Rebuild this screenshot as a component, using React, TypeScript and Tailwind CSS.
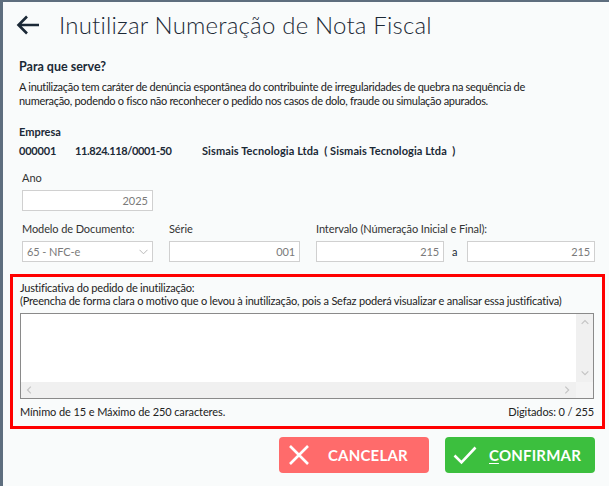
import React from 'react';

function Chevron({ dir }: { dir: 'up' | 'down' | 'left' | 'right' }) {
  const paths = {
    up: 'M2 7l4-4 4 4',
    down: 'M2 4l4 4 4-4',
    left: 'M7 2L3 6l4 4',
    right: 'M4 2l4 4-4 4',
  };
  return (
    <svg width="10" height="10" viewBox="0 0 12 12" fill="none" stroke="#c4c4c4" strokeWidth="1.4">
      <path d={paths[dir]} />
    </svg>
  );
}

function Field({ value, className }: { value: string; className: string }) {
  return (
    <div className={`h-[21px] border border-[#d0d0d0] bg-white px-[4px] text-right text-[11px] leading-[19px] text-[#7a7a7a] ${className}`}>
      {value}
    </div>
  );
}

export default function App() {
  return (
    <div className="h-[486px] w-[609px] overflow-hidden bg-[#5e6e7e] pl-[3px] pt-[2px] font-['Lato',_sans-serif]">
      <div className="h-full bg-[#f9fbfb] text-[#1e2a36]">
        {/* Header */}
        <div className="flex h-[46px] items-center pl-[13px]">
          <svg width="24" height="22" viewBox="0 0 24 22" fill="none" stroke="#1b2936" strokeWidth="2.6">
            <path d="M23 11H3 M11 2.5L2.5 11 11 19.5" />
          </svg>
          <h1 className="ml-[19px] text-[24px] font-light leading-none tracking-[0.2px] text-[#1b2936]">
            Inutilizar Numeração de Nota Fiscal
          </h1>
        </div>

        <div className="pl-[16px] pr-[4px]">
          <h2 className="mt-[12px] text-[12.5px] font-bold leading-[14px] text-[#1b2936]">Para que serve?</h2>
          <p className="mt-[6px] whitespace-nowrap text-[11px] leading-[14px] tracking-[-0.3px] text-[#222]">
            A inutilização tem caráter de denúncia espontânea do contribuinte de irregularidades de quebra na sequência de
            <br />
            numeração, podendo o fisco não reconhecer o pedido nos casos de dolo, fraude ou simulação apurados.
          </p>

          {/* Empresa */}
          <div className="mt-[17px] text-[11px] font-bold leading-[14px] text-[#1b2936]">Empresa</div>
          <div className="mt-[5px] flex text-[11px] font-bold leading-[14px] text-[#1b2936]">
            <span className="w-[56px] tracking-[-0.2px]">000001</span>
            <span className="w-[127px] tracking-[-0.4px]">11.824.118/0001-50</span>
            <span className="tracking-[0.1px]">Sismais Tecnologia Ltda&nbsp;&nbsp;( Sismais Tecnologia Ltda&nbsp;&nbsp;)</span>
          </div>

          {/* Ano */}
          <div className="ml-[3px] mt-[13px] text-[11px] leading-[14px] text-[#333]">Ano</div>
          <Field value="2025" className="ml-[3px] mt-[5px] w-[131px]" />

          {/* Modelo / Série / Intervalo */}
          <div className="ml-[3px] mt-[11px] flex text-[11px] leading-[14px] tracking-[-0.1px] text-[#333]">
            <div className="w-[131px]">
              <div>Modelo de Documento:</div>
              <div className="mt-[5px] flex h-[21px] items-center justify-between border border-[#d0d0d0] bg-white px-[4px] text-[11px] text-[#7a7a7a]">
                <span>65 - NFC-e</span>
                <svg width="9" height="6" viewBox="0 0 9 6" fill="none" stroke="#b8b8b8" strokeWidth="1">
                  <path d="M0.5 0.8L4.5 4.8 8.5 0.8" />
                </svg>
              </div>
            </div>
            <div className="ml-[16px] w-[131px]">
              <div>Série</div>
              <Field value="001" className="mt-[5px]" />
            </div>
            <div className="ml-[16px]">
              <div>Intervalo (Númeração Inicial e Final):</div>
              <div className="mt-[5px] flex items-center">
                <Field value="215" className="w-[128px]" />
                <span className="mx-[8px] w-[7px] text-[#1b2936]">a</span>
                <Field value="215" className="w-[128px]" />
              </div>
            </div>
          </div>
        </div>

        {/* Justificativa */}
        <div className="ml-[7px] mr-[4px] mt-[12px] border-[3px] border-[#ff0000] pb-[7px] pl-[7px] pr-[8px] pt-[5px]">
          <div className="whitespace-nowrap text-[11px] leading-[12.5px] tracking-[-0.2px] text-[#222]">
            <div>Justificativa do pedido de inutilização:</div>
            <div>(Preencha de forma clara o motivo que o levou à inutilização, pois a Sefaz poderá visualizar e analisar essa justificativa)</div>
          </div>
          <div className="mt-[6px] flex h-[86px] flex-col border border-[#8a8a8a] bg-white">
            <div className="flex flex-1">
              <div className="flex-1" />
              <div className="flex w-[17px] flex-col items-center justify-between bg-[#f0f0f0] py-[4px]">
                <Chevron dir="up" />
                <Chevron dir="down" />
              </div>
            </div>
            <div className="flex h-[16px]">
              <div className="flex flex-1 items-center justify-between bg-[#f0f0f0] px-[4px]">
                <Chevron dir="left" />
                <Chevron dir="right" />
              </div>
              <div className="w-[17px] bg-[#f4f4f4]" />
            </div>
          </div>
          <div className="mt-[6px] flex justify-between text-[11px] leading-[14px] tracking-[-0.1px] text-[#222]">
            <span>Mínimo de 15 e Máximo de 250 caracteres.</span>
            <span>Digitados: 0 / 255</span>
          </div>
        </div>

        {/* Buttons */}
        <div className="mt-[8px] flex justify-end gap-[16px] pr-[14px]">
          <button className="flex h-[36px] w-[150px] items-center rounded-[4px] bg-[#ff6b6b] pl-[9px] text-[15px] font-bold text-white">
            <svg width="22" height="22" viewBox="0 0 22 22" fill="none" stroke="white" strokeWidth="2.6">
              <path d="M2 2l18 18 M20 2L2 20" />
            </svg>
            <span className="ml-[18px] tracking-[0.2px]">CANCELAR</span>
          </button>
          <button className="flex h-[36px] w-[150px] items-center rounded-[4px] bg-[#3cbf3e] pl-[8px] text-[15px] font-bold text-white">
            <svg width="24" height="20" viewBox="0 0 24 20" fill="none" stroke="white" strokeWidth="2.6">
              <path d="M1.5 10.5l7 7L22.5 2.5" />
            </svg>
            <span className="ml-[12px] tracking-[0.2px]">
              <span className="underline underline-offset-2">C</span>ONFIRMAR
            </span>
          </button>
        </div>
      </div>
    </div>
  );
}
